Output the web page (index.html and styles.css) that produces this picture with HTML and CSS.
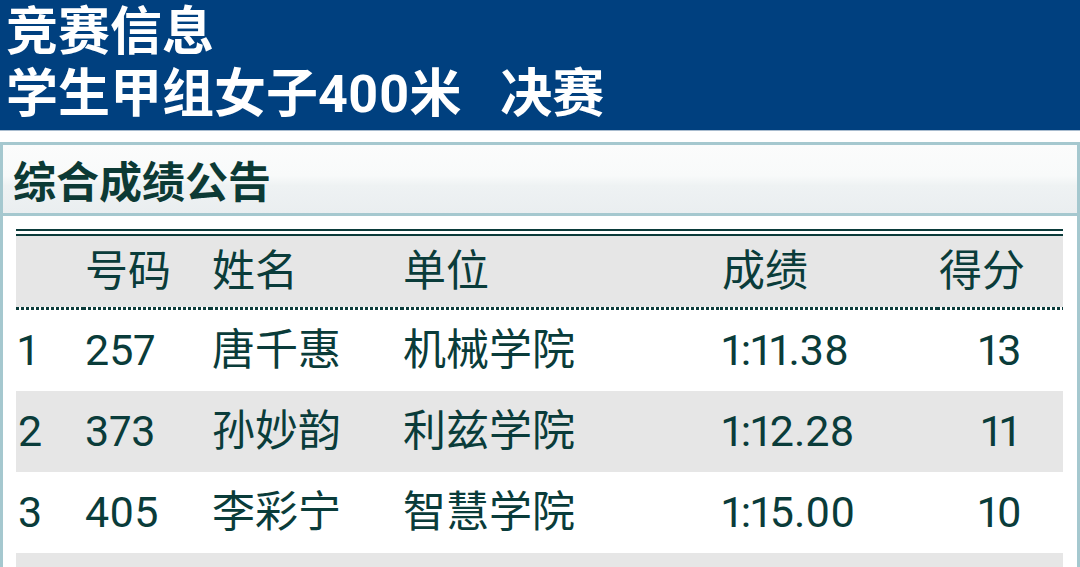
FILE: index.html
```html
<!DOCTYPE html>
<html lang="zh-CN">
<head>
<meta charset="utf-8">
<title>竞赛信息</title>
<link rel="stylesheet" href="styles.css">
</head>
<body>
<header class="top">
  <div class="top-line">竞赛信息</div>
  <div class="top-line">学生甲组女子400米&nbsp;&nbsp;&nbsp;决赛</div>
</header>
<section class="panel">
  <h2 class="panel-title">综合成绩公告</h2>
  <div class="panel-body">
    <table class="results">
      <colgroup>
        <col class="c-rank"><col class="c-no"><col class="c-name"><col class="c-unit"><col class="c-time"><col class="c-score">
      </colgroup>
      <thead>
        <tr><th></th><th>号码</th><th>姓名</th><th>单位</th><th>成绩</th><th>得分</th></tr>
      </thead>
      <tbody>
        <tr><td>1</td><td>257</td><td>唐千惠</td><td>机械学院</td><td>1:11.38</td><td class="score">13</td></tr>
        <tr><td>2</td><td>373</td><td>孙妙韵</td><td>利兹学院</td><td>1:12.28</td><td class="score">11</td></tr>
        <tr><td>3</td><td>405</td><td>李彩宁</td><td>智慧学院</td><td>1:15.00</td><td class="score">10</td></tr>
        <tr><td></td><td></td><td></td><td></td><td></td><td class="score"></td></tr>
      </tbody>
    </table>
  </div>
</section>
</body>
</html>
```

FILE: styles.css
```css
html, body {
  margin: 0;
  padding: 0;
  background: #ffffff;
}

body {
  font-family: Roboto, "Noto Sans CJK SC", sans-serif;
  font-variant-numeric: proportional-nums;
  color: #0a3c3a;
}

.top {
  background: #00407f;
  color: #ffffff;
  font-weight: 700;
  font-size: 52px;
  line-height: 62px;
  padding: 2px 6px 4px;
  border-bottom: 1px solid #a9bccf;
}

.top-line {
  white-space: nowrap;
}

.panel {
  margin-top: 11px;
  border: 3px solid #a5c8cf;
  border-bottom: none;
}

.panel-title {
  margin: 0;
  height: 68px;
  display: flex;
  align-items: center;
  padding: 0 10px;
  font-size: 43px;
  font-weight: 700;
  color: #0c3a35;
  background: linear-gradient(to bottom, #fbfcfc 0%, #f8fafa 45%, #eef2f3 60%, #eaeef0 100%);
  border-bottom: 3px solid #a5c8cf;
}

.panel-body {
  padding: 13px 14px 0 13px;
}

.results {
  width: 100%;
  table-layout: fixed;
  border-collapse: separate;
  border-spacing: 0;
  font-size: 43px;
  line-height: 1;
}

.c-rank { width: 67px; }
.c-no { width: 127px; }
.c-name { width: 191px; }
.c-unit { width: 319px; }
.c-time { width: 217px; }
.c-score { width: 126px; }

.results th {
  font-weight: 400;
  text-align: left;
  height: 71px;
  padding: 7px 0 3px 2px;
  background:
    linear-gradient(#0b3b3a, #0b3b3a) left top / 100% 2px no-repeat,
    linear-gradient(#0b3b3a, #0b3b3a) left 5px / 100% 2px no-repeat,
    repeating-linear-gradient(90deg, #0b3b3a 0 3px, #ffffff 3px 5px) left bottom / 100% 3px no-repeat,
    linear-gradient(#e6e6e6, #e6e6e6) left 7px / 100% calc(100% - 10px) no-repeat;
}

.results td {
  height: 81px;
  padding: 0 0 0 2px;
  white-space: nowrap;
}

.results tbody tr:nth-child(even) td {
  background: #e6e6e6;
}

.results td.score {
  text-align: center;
  padding: 0;
}
```
